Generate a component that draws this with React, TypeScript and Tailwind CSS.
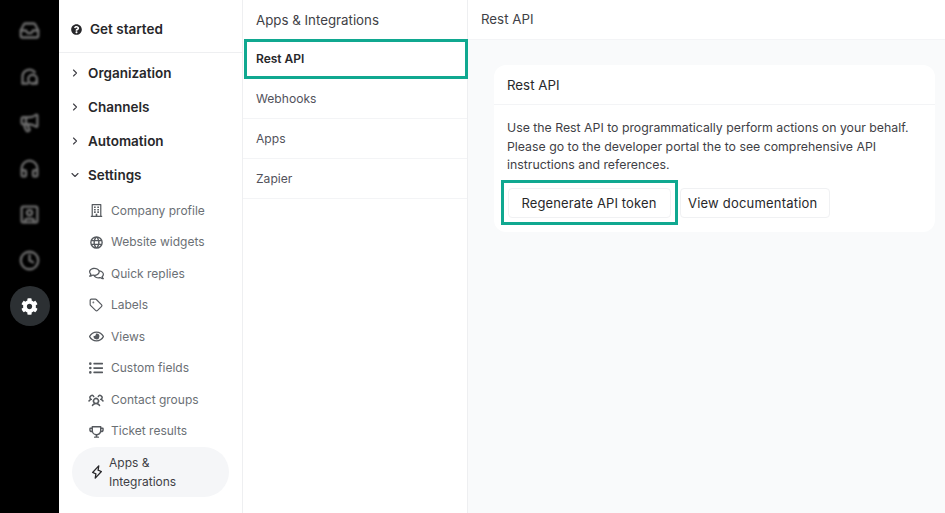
import {
  ChevronDown,
  ChevronRight,
  Clock,
  Headphones,
  Inbox,
  Megaphone,
  Tag,
  SquareUser,
} from "lucide-react";
import { FaCog, FaListUl, FaQuestionCircle, FaRegBuilding, FaRegComments, FaRegEye } from "react-icons/fa";
import { PiGlobeBold, PiLightningBold, PiTrophyBold, PiUsersThreeBold } from "react-icons/pi";

function ChatBubbleIcon({ className }: { className?: string }) {
  return (
    <svg width="21" height="21" viewBox="0 0 24 24" fill="none" stroke="currentColor" strokeWidth="2.6" strokeLinecap="round" strokeLinejoin="round" className={className}>
      <path d="M4 20v-8a8 8 0 0 1 14-5" />
      <path d="M4 20h6" />
      <circle cx="15.5" cy="15" r="5" />
      <path d="M20.5 15v5h-5" />
    </svg>
  );
}

const railIcons = [Inbox, ChatBubbleIcon, Megaphone, Headphones, SquareUser, Clock];

const groups = ["Organization", "Channels", "Automation"];

const settingsItems = [
  { label: "Company profile", icon: FaRegBuilding, size: 13 },
  { label: "Website widgets", icon: PiGlobeBold, size: 15 },
  { label: "Quick replies", icon: FaRegComments, size: 15 },
  { label: "Labels", icon: Tag, size: 14 },
  { label: "Views", icon: FaRegEye, size: 15 },
  { label: "Custom fields", icon: FaListUl, size: 14 },
  { label: "Contact groups", icon: PiUsersThreeBold, size: 16 },
  { label: "Ticket results", icon: PiTrophyBold, size: 15 },
];

const integrations = ["Webhooks", "Apps", "Zapier"];

export default function App() {
  return (
    <div className="flex h-[513px] w-[945px] overflow-hidden bg-white font-['Inter',sans-serif] text-[13px] text-[#27272a]">
      {/* Icon rail */}
      <nav className="flex w-[59px] shrink-0 flex-col items-center bg-black pt-[7px]">
        {railIcons.map((Icon, i) => (
          <div key={i} className="flex h-[46px] w-10 items-center justify-center">
            <Icon size={21} strokeWidth={2.6} className="text-[#6e6e6e] blur-[1.1px]" />
          </div>
        ))}
        <div className="mt-[3px] flex h-10 w-10 items-center justify-center rounded-full bg-[#2c3033]">
          <FaCog size={17} className="text-white" />
        </div>
      </nav>

      {/* Settings sidebar */}
      <aside className="w-[184px] shrink-0 border-r border-[#eeeff1]">
        <div className="flex h-[53px] items-center gap-2 border-b border-[#eeeff1] pt-[7px] pl-[12px]">
          <FaQuestionCircle size={11} className="text-[#27272a]" />
          <span className="text-[13.5px] font-semibold">Get started</span>
        </div>
        <div className="pt-[3px]">
          {groups.map((g) => (
            <div key={g} className="flex h-[34px] items-center gap-[7px] pl-[10px]">
              <ChevronRight size={12} strokeWidth={2.2} className="text-[#3f3f46]" />
              <span className="text-[13.5px] font-semibold">{g}</span>
            </div>
          ))}
          <div className="flex h-[34px] items-center gap-[7px] pl-[10px]">
            <ChevronDown size={12} strokeWidth={2.2} className="text-[#3f3f46]" />
            <span className="text-[13.5px] font-semibold">Settings</span>
          </div>
        </div>
        <ul className="pt-[3px]">
          {settingsItems.map(({ label, icon: Icon, size }) => (
            <li key={label} className="flex h-[31.5px] items-center pl-[29px] text-[12px] text-[#6b7075]">
              <span className="mr-[7px] flex w-4 items-center justify-center">
                <Icon size={size} className="text-[#55595e]" />
              </span>
              <span>{label}</span>
            </li>
          ))}
        </ul>
        <div className="ml-[13px] flex h-[50px] w-[157px] items-center gap-[5px] rounded-[25px] bg-[#f5f6f8] pl-[18px] text-[12px] leading-[19px] text-[#3f3f46]">
          <PiLightningBold size={14} className="text-[#27272a]" />
          <span>
            Apps &amp;
            <br />
            Integrations
          </span>
        </div>
      </aside>

      {/* Integrations column */}
      <section className="w-[225px] shrink-0 border-r border-[#eeeff1]">
        <div className="flex h-[39px] items-center pt-[2px] pl-[13px] text-[13.3px] text-[#3f3f46]">Apps &amp; Integrations</div>
        <div className="relative flex h-[40px] items-center pl-[13px] text-[12px] font-semibold text-[#27272a]">
          Rest API
          <div className="absolute inset-y-0 right-[-1px] left-px border-[3px] border-[#10a890]" />
        </div>
        {integrations.map((item) => (
          <div key={item} className="flex h-[40px] items-center border-b border-[#f3f4f6] pt-[2px] pl-[13px] text-[12.1px] text-[#52525b]">
            {item}
          </div>
        ))}
      </section>

      {/* Main panel */}
      <main className="flex min-w-0 flex-1 flex-col bg-[#f9fafb]">
        <header className="flex h-[40px] shrink-0 items-center border-b border-[#f3f4f6] bg-white pt-px pl-[13px] text-[13.3px] text-[#3f3f46]">Rest API</header>
        <div className="pt-[25px] pr-[10px] pl-[26px]">
          <div className="rounded-xl bg-white">
            <div className="flex h-[40px] items-center border-b border-[#f3f4f6] pt-[2px] pl-[13px] text-[13.3px] text-[#27272a]">Rest API</div>
            <div className="px-[13px] pt-[14px] pb-[14px]">
              <p className="text-[12.3px] leading-[18.5px] text-[#3f3f46]">
                Use the Rest API to programmatically perform actions on your behalf.
                <br />
                Please go to the developer portal the to see comprehensive API
                <br />
                instructions and references.
              </p>
              <div className="mt-[13px] flex gap-[9px] pl-px">
                <div className="relative">
                  <button className="h-[30px] w-[163px] rounded border border-[#f0f1f3] bg-white pt-[2px] pr-px text-[13px] tracking-[0.12px] text-[#27272a]">
                    Regenerate API token
                  </button>
                  <div className="absolute -inset-x-[7px] -top-[8px] -bottom-[7px] border-[3px] border-[#10a890]" />
                </div>
                <button className="h-[30px] w-[150px] rounded border border-[#f0f1f3] bg-white pt-[2px] pl-[7px] text-left text-[13px] tracking-[0.2px] text-[#27272a]">
                  View documentation
                </button>
              </div>
            </div>
          </div>
        </div>
      </main>
    </div>
  );
}
